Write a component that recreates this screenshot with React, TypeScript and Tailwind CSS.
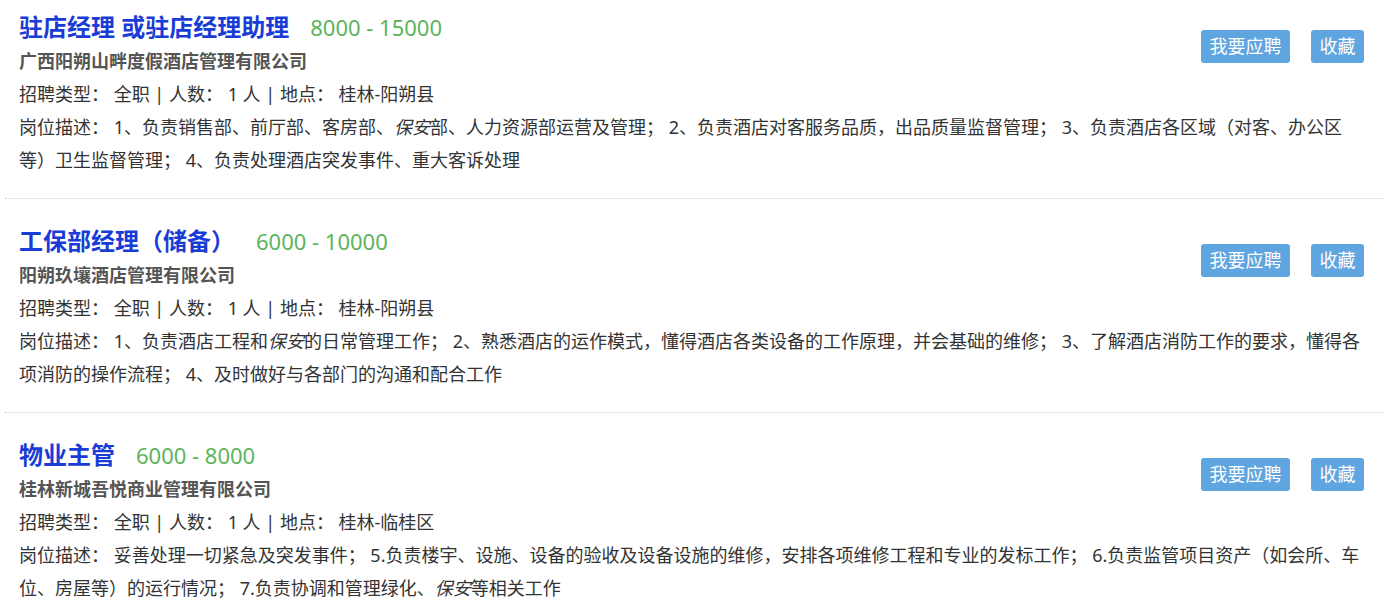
import React from "react"

type Job = {
  title: string
  salary: string
  company: string
  place: string
  desc: React.ReactNode[]
}

const jobs: Job[] = [
  {
    title: "驻店经理 或驻店经理助理",
    salary: "8000 - 15000",
    company: "广西阳朔山畔度假酒店管理有限公司",
    place: "桂林-阳朔县",
    desc: [
      <>
        岗位描述： 1、负责销售部、前厅部、客房部、<i>保安</i>部、人力资源部运营及管理； 2、负责酒店对客服务品质，出品质量监督管理； 3、负责酒店各区域（对客、办公区
      </>,
      <>等）卫生监督管理； 4、负责处理酒店突发事件、重大客诉处理</>,
    ],
  },
  {
    title: "工保部经理（储备）",
    salary: "6000 - 10000",
    company: "阳朔玖壤酒店管理有限公司",
    place: "桂林-阳朔县",
    desc: [
      <>
        岗位描述： 1、负责酒店工程和<i>保安</i>的日常管理工作； 2、熟悉酒店的运作模式，懂得酒店各类设备的工作原理，并会基础的维修； 3、了解酒店消防工作的要求，懂得各
      </>,
      <>项消防的操作流程； 4、及时做好与各部门的沟通和配合工作</>,
    ],
  },
  {
    title: "物业主管",
    salary: "6000 - 8000",
    company: "桂林新城吾悦商业管理有限公司",
    place: "桂林-临桂区",
    desc: [
      <>
        岗位描述： 妥善处理一切紧急及突发事件； 5.负责楼宇、设施、设备的验收及设备设施的维修，安排各项维修工程和专业的发标工作； 6.负责监管项目资产（如会所、车
      </>,
      <>
        位、房屋等）的运行情况； 7.负责协调和管理绿化、<i>保安</i>等相关工作
      </>,
    ],
  },
]

function JobItem({ job }: { job: Job }) {
  return (
    <div className="border-b border-dotted border-[#cfcfcf] pl-[14px] pr-[19px] pt-[25px] pb-[21px] first:pt-[10px]">
      <div className="flex items-start">
        <div className="flex-1">
          {/* title + salary */}
          <div className="flex h-[34px] items-center">
            <span className="text-[24px] font-bold text-[#1a3cd6]">{job.title}</span>
            <span className="ml-[21px] text-[22px] text-[#5cb45a]">{job.salary}</span>
          </div>
          <div className="h-[34px] text-[18px] font-bold leading-[34px] text-[#555]">
            {job.company}
          </div>
          <div className="h-[33px] leading-[33px]">
            招聘类型： 全职 | 人数： 1 人 | 地点： {job.place}
          </div>
        </div>
        {/* actions */}
        <div className="mt-[20px] flex gap-[21px]">
          <button className="h-[33px] w-[89px] rounded-[3px] bg-[#5fa5e0] text-[18px] text-white">
            我要应聘
          </button>
          <button className="h-[33px] w-[53px] rounded-[3px] bg-[#5fa5e0] text-[18px] text-white">
            收藏
          </button>
        </div>
      </div>
      <div className="whitespace-nowrap leading-[33px]">
        {job.desc.map((line, i) => (
          <div key={i}>{line}</div>
        ))}
      </div>
    </div>
  )
}

export default function App() {
  return (
    <div className="min-h-screen bg-white pl-[5px] pr-[8px] font-['Noto_Sans','Noto_Sans_CJK_SC',sans-serif] text-[18px] text-[#333]">
      {jobs.map((job) => (
        <JobItem key={job.title} job={job} />
      ))}
    </div>
  )
}
